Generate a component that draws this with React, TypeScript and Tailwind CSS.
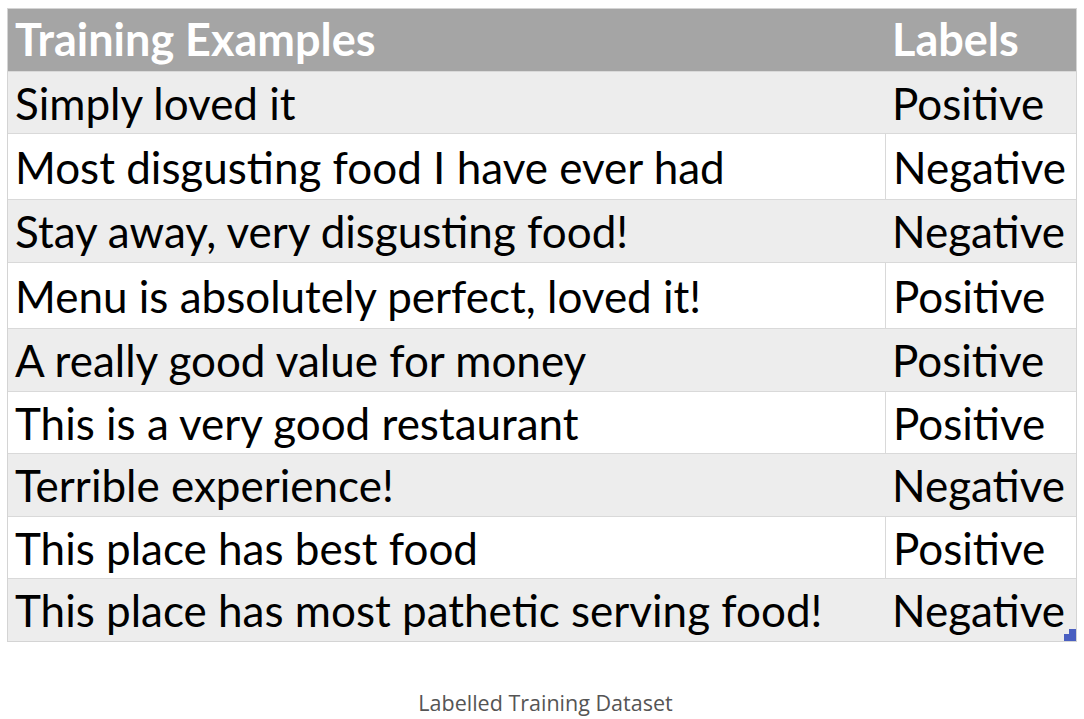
import React from 'react';

interface Row {
  text: string;
  label: string;
  h: string;
}

const rows: Row[] = [
  { text: 'Simply loved it', label: 'Positive', h: 'h-[62px]' },
  { text: 'Most disgusting food I have ever had', label: 'Negative', h: 'h-[66px]' },
  { text: 'Stay away, very disgusting food!', label: 'Negative', h: 'h-[63px]' },
  { text: 'Menu is absolutely perfect, loved it!', label: 'Positive', h: 'h-[66px]' },
  { text: 'A really good value for money', label: 'Positive', h: 'h-[63px]' },
  { text: 'This is a very good restaurant', label: 'Positive', h: 'h-[62px]' },
  { text: 'Terrible experience!', label: 'Negative', h: 'h-[63px]' },
  { text: 'This place has best food', label: 'Positive', h: 'h-[62px]' },
  { text: 'This place has most pathetic serving food!', label: 'Negative', h: 'h-[63px]' },
];

const App: React.FC = () => {
  return (
    <div className="w-[1084px] h-[719px] bg-white font-['Lato',sans-serif] pl-[7px] pt-[8px]">
      <div className="relative w-[1070px] border border-[#d4d4d4]">
        {/* header */}
        <div className="flex h-[62px] bg-[#a5a5a5] text-white font-bold text-[45px]">
          <div className="w-[877px] flex items-center pl-[7px] whitespace-nowrap">Training Examples</div>
          <div className="flex-1 flex items-center pl-[7px]">Labels</div>
        </div>
        {rows.map((r, i) => {
          const gray = i % 2 === 0;
          return (
            <div
              key={i}
              className={`flex ${r.h} text-[44px] text-black border-t border-[#d9d9d9] ${gray ? 'bg-[#ededed]' : 'bg-white'}`}
            >
              <div className="w-[877px] flex items-center pl-[7px] whitespace-nowrap">{r.text}</div>
              <div className={`flex-1 flex items-center pl-[7px] whitespace-nowrap ${gray ? '' : 'border-l border-[#d9d9d9]'}`}>
                {r.label}
              </div>
            </div>
          );
        })}
        {/* resize handle */}
        <svg className="absolute right-[0px] bottom-[0px]" width="12" height="12" viewBox="0 0 12 12">
          <path d="M5 0H12V12H0V5H5Z" fill="#4a5fc1" />
        </svg>
      </div>
      <div className="mt-[45px] text-center text-[21.5px] text-[#555555] font-['Open_Sans',sans-serif]">
        Labelled Training Dataset
      </div>
    </div>
  );
};

export default App;
